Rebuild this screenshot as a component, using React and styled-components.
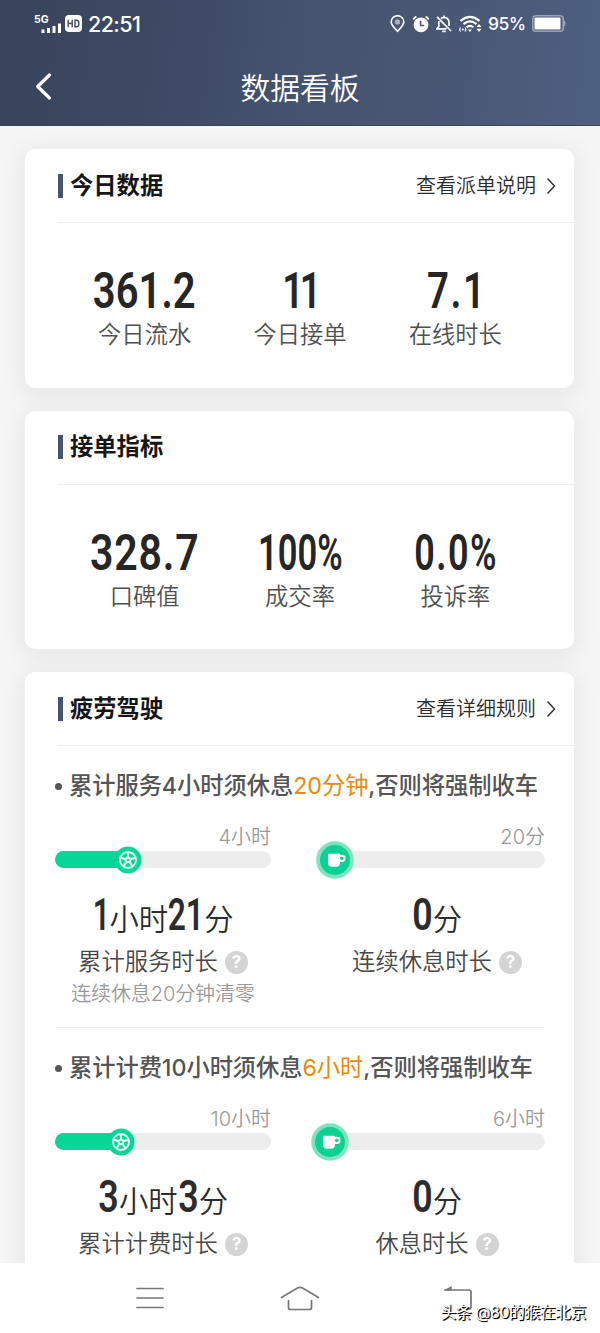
import React from 'react';
import styled, { createGlobalStyle } from 'styled-components';

const Global = createGlobalStyle`
  * { box-sizing: border-box; }
  body { margin: 0; background: #fff; font-family: Inter, "Noto Sans CJK SC", sans-serif; }
`;

const Screen = styled.div`
  width: 600px;
  height: 1333px;
  display: flex;
  flex-direction: column;
  overflow: hidden;
  position: relative;
`;

const Header = styled.header`
  height: 126px;
  flex: none;
  background: linear-gradient(97deg, #38445a 0%, #3d4963 25%, #46536f 52%, #4a5877 78%, #4d6080 100%);
  border-bottom: 1px solid #39445a;
  color: #fff;
`;

const StatusBar = styled.div`
  height: 47px;
  padding: 0 34px 0 34px;
  display: flex;
  justify-content: space-between;
  align-items: center;
`;

const StatusGroup = styled.div`
  display: flex;
  align-items: center;
  gap: ${(p) => p.$gap}px;
`;

const Clock = styled.span`
  font-size: 21.5px;
  font-weight: 500;
  line-height: 24px;
  letter-spacing: -0.6px;
  margin-left: 3px;
`;

const Percent = styled.span`
  font-size: 17.5px;
  font-weight: 500;
  line-height: 24px;
  letter-spacing: -0.6px;
`;

const TitleBar = styled.div`
  height: 79px;
  padding: 0 34px;
  display: grid;
  grid-template-columns: 20px 1fr 20px;
  align-items: center;
  & > svg { margin-top: -2px; }
`;

const Title = styled.h1`
  margin: 0;
  padding-top: 3px;
  font-size: 29.8px;
  font-weight: 350;
  line-height: 42px;
  text-align: center;
`;

const Content = styled.main`
  flex: 1;
  min-height: 0;
  overflow: hidden;
  padding: 23px 26px 0 25px;
  background: #f5f5f5;
  display: flex;
  flex-direction: column;
  gap: 23px;
`;

const Card = styled.section`
  flex: none;
  height: ${(p) => p.$height}px;
  background: #fff;
  border-radius: 10px;
  box-shadow: 0 4px 22px 5px rgba(0, 0, 0, 0.055);
`;

const CardHead = styled.div`
  height: 74px;
  margin-left: 33px;
  padding-right: 18px;
  border-bottom: 1px solid #eee;
  display: flex;
  align-items: center;
  justify-content: space-between;
`;

const CardTitle = styled.h2`
  margin: 0;
  display: flex;
  align-items: center;
  gap: 7px;
  font-size: 23.3px;
  font-weight: 700;
  line-height: 30px;
  color: #161616;
  &::before {
    content: "";
    width: 5px;
    height: 24px;
    background: #47546f;
  }
`;

const MoreLink = styled.a`
  display: flex;
  align-items: center;
  gap: 10px;
  font-size: 20px;
  font-weight: 350;
  line-height: 28px;
  color: #2c2c2c;
`;

const Stats = styled.div`
  padding: 42px 41px 0 42px;
  display: grid;
  grid-template-columns: repeat(3, 1fr);
`;

const Stat = styled.div`
  display: flex;
  flex-direction: column;
  align-items: center;
`;

const StatValue = styled.span`
  font-family: Roboto, sans-serif;
  font-weight: 600;
  font-size: 50px;
  line-height: 52px;
  color: #262626;
  white-space: nowrap;
  letter-spacing: ${(p) => p.$spacing || 0}px;
  padding-left: ${(p) => p.$indent || 0}px;
  margin-right: ${(p) => -(p.$spacing || 0)}px;
  transform: scaleX(${(p) => p.$narrow});
`;

const StatLabel = styled.span`
  margin-top: 1px;
  font-size: 23.3px;
  line-height: 34px;
  color: #505050;
  font-weight: 350;
`;

const Block = styled.div`
  margin: 0 29px 0 30px;
  height: 282px;
  padding-top: 22px;
  border-bottom: 1px solid #eee;
`;

const Notice = styled.p`
  margin: 0;
  display: flex;
  align-items: center;
  font-size: 23.3px;
  line-height: 36px;
  font-weight: 500;
  letter-spacing: -0.08px;
  color: #555;
  white-space: nowrap;
  &::before {
    content: "";
    width: 7px;
    height: 7px;
    margin-right: 7px;
    border-radius: 50%;
    background: #555;
  }
`;

const Warn = styled.span`
  color: #e88b0c;
  font-weight: 400;
`;

const Columns = styled.div`
  margin-top: 19px;
  display: flex;
  justify-content: space-between;
`;

const Column = styled.div`
  width: 216px;
  display: flex;
  flex-direction: column;
  align-items: center;
`;

const Limit = styled.span`
  align-self: flex-end;
  font-size: 20px;
  line-height: 28px;
  font-weight: 350;
  color: #999;
`;

const Track = styled.div`
  position: relative;
  width: 100%;
  height: 17px;
  border-radius: 9px;
  background: #ededed;
`;

const Fill = styled.div`
  height: 100%;
  border-radius: 9px;
  background: #06d797;
`;

const Knob = styled.span`
  position: absolute;
  top: 50%;
  transform: translate(-50%, -50%);
  display: flex;
`;

const Duration = styled.div`
  margin-top: 23px;
  display: flex;
  align-items: baseline;
  font-size: 29.3px;
  line-height: 50px;
  font-weight: 350;
  color: #2c2c2c;
`;

const DurationNumber = styled.span`
  display: inline-flex;
  justify-content: center;
  width: ${(p) => p.$width}px;
  font-family: Roboto, sans-serif;
  font-size: 43.5px;
  font-weight: 600;
  & > span { transform: scaleX(${(p) => p.$narrow}); }
`;

const Caption = styled.div`
  display: flex;
  align-items: center;
  gap: 7px;
  font-size: 23.3px;
  line-height: 34px;
  font-weight: 350;
  color: #484848;
`;

const Help = styled.span`
  width: 23px;
  height: 23px;
  border-radius: 50%;
  background: #d4d4d4;
  color: #fff;
  font: 700 17px/23px Inter, sans-serif;
  text-align: center;
`;

const Note = styled.span`
  font-size: 20px;
  line-height: 30px;
  font-weight: 350;
  letter-spacing: -0.1px;
  color: #999;
`;

const NavBar = styled.nav`
  height: 70px;
  flex: none;
  background: #fff;
  display: grid;
  grid-template-columns: 78px 144px 156px 159px 63px;
  align-items: center;
  & > svg { grid-row: 1; justify-self: center; }
`;

const Watermark = styled.span`
  position: absolute;
  right: 14px;
  top: 1301px;
  font-size: 15.6px;
  line-height: 24px;
  letter-spacing: -0.25px;
  color: #fff;
  white-space: nowrap;
  text-shadow: 1px 1px 1px #000, 1px 1px 0 #333;
`;

const SignalIcon = () => (
  <svg width="28" height="22" viewBox="0 0 28 22">
    <text x="0" y="9.500" fill="#fff" fontFamily="Inter, sans-serif" fontSize="10.500" fontWeight="700">5G</text>
    <g fill="#fff">
      <rect x="7.500" y="16.500" width="3" height="3.500" />
      <rect x="13" y="15" width="3" height="5" />
      <rect x="18.500" y="13" width="3" height="7" />
      <rect x="24" y="10.500" width="3" height="9.500" />
    </g>
  </svg>
);

const HdIcon = () => (
  <svg width="17" height="17" viewBox="0 0 17 17">
    <rect width="17" height="17" rx="4" fill="#fff" />
    <path d="M3.200 4.700v7.600M7.200 4.700v7.600M3.200 8.500h4M10 5.200h1.600q2.200 0 2.200 2.200v2.200q0 2.200-2.200 2.200H10z" fill="none" stroke="#3d4963" strokeWidth="1.400" />
  </svg>
);

const PinIcon = () => (
  <svg width="15" height="18" viewBox="0 0 15 18">
    <path d="M7.500 16.300C4 12.600 1.200 10 1.200 7a6.300 6.300 0 0 1 12.600 0c0 3-2.800 5.600-6.300 9.300z" fill="none" stroke="#fff" strokeWidth="1.600" />
    <circle cx="7.500" cy="7" r="2.700" fill="#a7adbc" />
  </svg>
);

const AlarmIcon = () => (
  <svg width="18" height="18" viewBox="0 0 18 18">
    <circle cx="9" cy="9.800" r="7.400" fill="#fff" />
    <path d="M1.300 4.300 4.300 1.400M16.700 4.300l-3-2.900" stroke="#fff" strokeWidth="1.900" />
    <path d="M8.600 5.700v4.700h3.600" fill="none" stroke="#46536f" strokeWidth="1.500" />
  </svg>
);

const MuteIcon = () => (
  <svg width="16" height="18" viewBox="0 0 16 18" fill="none" stroke="#fff" strokeWidth="1.700">
    <path d="M1 1.800 15 16M2.800 6v5.500L1 13.800h9.500M5 3.600Q6.200 2.300 8 2.300q4.500.3 5 4.700v4M8 .5v1.800" />
    <path d="M6.200 16.400h3.600" />
  </svg>
);

const WifiIcon = () => (
  <svg width="23" height="18" viewBox="0 0 23 18" fill="none" stroke="#fff" strokeWidth="2.200">
    <path d="M1.500 5.800Q11-2.200 20.500 5.800M4.500 9.200q6.500-5.600 13 0M7.600 12.300q3.400-3 6.800 0" />
    <path d="M9 14.500h4L11 17z" fill="#fff" stroke="none" />
    <path d="M1.500 12.500q-1.500 2 0 4M6 12.500q1.500 2 0 4" strokeWidth="1.200" />
    <circle cx="3.750" cy="14.500" r="1" fill="#fff" stroke="none" />
    <path d="M17.500 12 20 9l2.500 3zM17.500 13.800h5L20 17z" fill="#fff" stroke="none" />
  </svg>
);

const BatteryIcon = () => (
  <svg width="34" height="17" viewBox="0 0 34 17">
    <rect x=".8" y=".8" width="30.400" height="15.400" rx="3" fill="none" stroke="#9aa3b5" strokeWidth="1.600" />
    <rect x="2.500" y="2.500" width="26" height="12" rx="1" fill="#fff" />
    <path d="M32 5.500q1.500.5 1.500 3t-1.500 3z" fill="#9aa3b5" />
  </svg>
);

const BackIcon = () => (
  <svg width="20" height="28" viewBox="0 0 20 28">
    <path d="M15.500 3 3.700 14.500 15.500 26" fill="none" stroke="#fff" strokeWidth="3.200" strokeLinecap="round" strokeLinejoin="round" />
  </svg>
);

const ChevronIcon = () => (
  <svg width="10" height="18" viewBox="0 0 10 18">
    <path d="m1.500 1.500 7 7.500-7 7.500" fill="none" stroke="#333" strokeWidth="1.500" />
  </svg>
);

const WheelIcon = () => (
  <svg width="28" height="28" viewBox="0 0 28 28">
    <circle cx="14" cy="14" r="13.500" fill="#06d797" />
    <circle cx="14" cy="14" r="8" fill="none" stroke="#e8fff6" strokeWidth="2" />
    <g stroke="#e8fff6" strokeWidth="2">
      {[0, 72, 144, 216, 288].map((a) => (
        <path key={a} d="M14 11.500V6.500" transform={`rotate(${a} 14 14)`} />
      ))}
    </g>
    <circle cx="14" cy="14" r="2.300" fill="none" stroke="#e8fff6" strokeWidth="1.900" />
  </svg>
);

const CupIcon = () => (
  <svg width="38" height="38" viewBox="0 0 38 38">
    <circle cx="19" cy="19" r="18.800" fill="#7fe3be" />
    <circle cx="19" cy="19" r="15" fill="#0bd192" />
    <path d="M12 12.700h12v9q0 4-4 4h-4q-4 0-4-4z" fill="#fff" />
    <rect x="23" y="14.800" width="5.600" height="5.200" rx="2.400" fill="none" stroke="#fff" strokeWidth="1.900" />
  </svg>
);

const NavIcon = styled.svg`
  grid-column: ${(p) => p.$column};
  fill: none;
  stroke: #777;
  stroke-width: 1.7;
  stroke-linecap: round;
`;

const MenuIcon = () => (
  <NavIcon $column={2} width="28" height="24" viewBox="0 0 28 24">
    <path d="M1 2.500h26M1 12h26M1 21.500h26" />
  </NavIcon>
);

const HomeIcon = () => (
  <NavIcon $column={3} width="40" height="26" viewBox="0 0 40 26">
    <path d="M1.500 12.500 17.500 3q2.500-1.300 5 0l16 9.500M8.500 15.500v7q0 2 2 2h19q2 0 2-2v-7" />
  </NavIcon>
);

const ReturnIcon = () => (
  <NavIcon $column={4} width="30" height="26" viewBox="0 0 30 26">
    <path d="M2 5h24q2 0 2 2v15q0 2-2 2H15" />
    <path d="M1.500 5 8.500 1.500V5z" fill="#777" strokeWidth=".5" />
  </NavIcon>
);

function StatCard({ title, link, stats, height }) {
  return (
    <Card $height={height}>
      <CardHead>
        <CardTitle>{title}</CardTitle>
        {link && <MoreLink>{link}<ChevronIcon /></MoreLink>}
      </CardHead>
      <Stats>
        {stats.map((s) => (
          <Stat key={s.label}>
            <StatValue $narrow={s.narrow} $spacing={s.spacing} $indent={s.indent}>{s.value}</StatValue>
            <StatLabel>{s.label}</StatLabel>
          </Stat>
        ))}
      </Stats>
    </Card>
  );
}

function Meter({ limit, progress, icon, fill, parts, label, note }) {
  return (
    <Column>
      <Limit>{limit}</Limit>
      <Track>
        {fill && <Fill style={{ width: progress }} />}
        <Knob style={{ left: progress }}>{icon}</Knob>
      </Track>
      <Duration>
        {parts.map(([n, unit, width, narrow = 0.82]) => (
          <React.Fragment key={unit}>
            <DurationNumber $width={width} $narrow={narrow}><span>{n}</span></DurationNumber>
            {unit}
          </React.Fragment>
        ))}
      </Duration>
      <Caption>{label}<Help>?</Help></Caption>
      {note && <Note>{note}</Note>}
    </Column>
  );
}

export default function App() {
  return (
    <Screen>
      <Global />
      <Header>
        <StatusBar>
          <StatusGroup $gap={3}>
            <SignalIcon />
            <HdIcon />
            <Clock>22:51</Clock>
          </StatusGroup>
          <StatusGroup $gap={6.5}>
            <PinIcon />
            <AlarmIcon />
            <MuteIcon />
            <WifiIcon />
            <Percent>95%</Percent>
            <BatteryIcon />
          </StatusGroup>
        </StatusBar>
        <TitleBar>
          <BackIcon />
          <Title>数据看板</Title>
        </TitleBar>
      </Header>
      <Content>
        <StatCard
          height={238.5}
          title="今日数据"
          link="查看派单说明"
          stats={[
            { value: '361.2', label: '今日流水', narrow: 0.8 },
            { value: '11', label: '今日接单', narrow: 0.75, spacing: -5, indent: 6 },
            { value: '7.1', label: '在线时长', narrow: 0.77, spacing: 2 },
          ]}
        />
        <StatCard
          height={238.5}
          title="接单指标"
          stats={[
            { value: '328.7', label: '口碑值', narrow: 0.82, spacing: 1 },
            { value: '100%', label: '成交率', narrow: 0.69 },
            { value: '0.0%', label: '投诉率', narrow: 0.72, spacing: 2 },
          ]}
        />
        <Card $height={700}>
          <CardHead>
            <CardTitle>疲劳驾驶</CardTitle>
            <MoreLink>查看详细规则<ChevronIcon /></MoreLink>
          </CardHead>
          <Block>
            <Notice>累计服务4小时须休息<Warn>20分钟</Warn>,否则将强制收车</Notice>
            <Columns>
              <Meter limit="4小时" progress="34%" fill icon={<WheelIcon />} parts={[['1', '小时', 17, 0.69], ['21', '分', 36, 0.73]]} label="累计服务时长" note="连续休息20分钟清零" />
              <Meter limit="20分" progress="2.7%" icon={<CupIcon />} parts={[['0', '分', 21]]} label="连续休息时长" />
            </Columns>
          </Block>
          <Block>
            <Notice>累计计费10小时须休息<Warn>6小时</Warn>,否则将强制收车</Notice>
            <Columns>
              <Meter limit="10小时" progress="30.7%" fill icon={<WheelIcon />} parts={[['3', '小时', 21], ['3', '分', 21]]} label="累计计费时长" />
              <Meter limit="6小时" progress="0.4%" icon={<CupIcon />} parts={[['0', '分', 21]]} label="休息时长" />
            </Columns>
          </Block>
        </Card>
      </Content>
      <NavBar>
        <MenuIcon />
        <HomeIcon />
        <ReturnIcon />
      </NavBar>
      <Watermark>头条 @80的猴在北京</Watermark>
    </Screen>
  );
}
